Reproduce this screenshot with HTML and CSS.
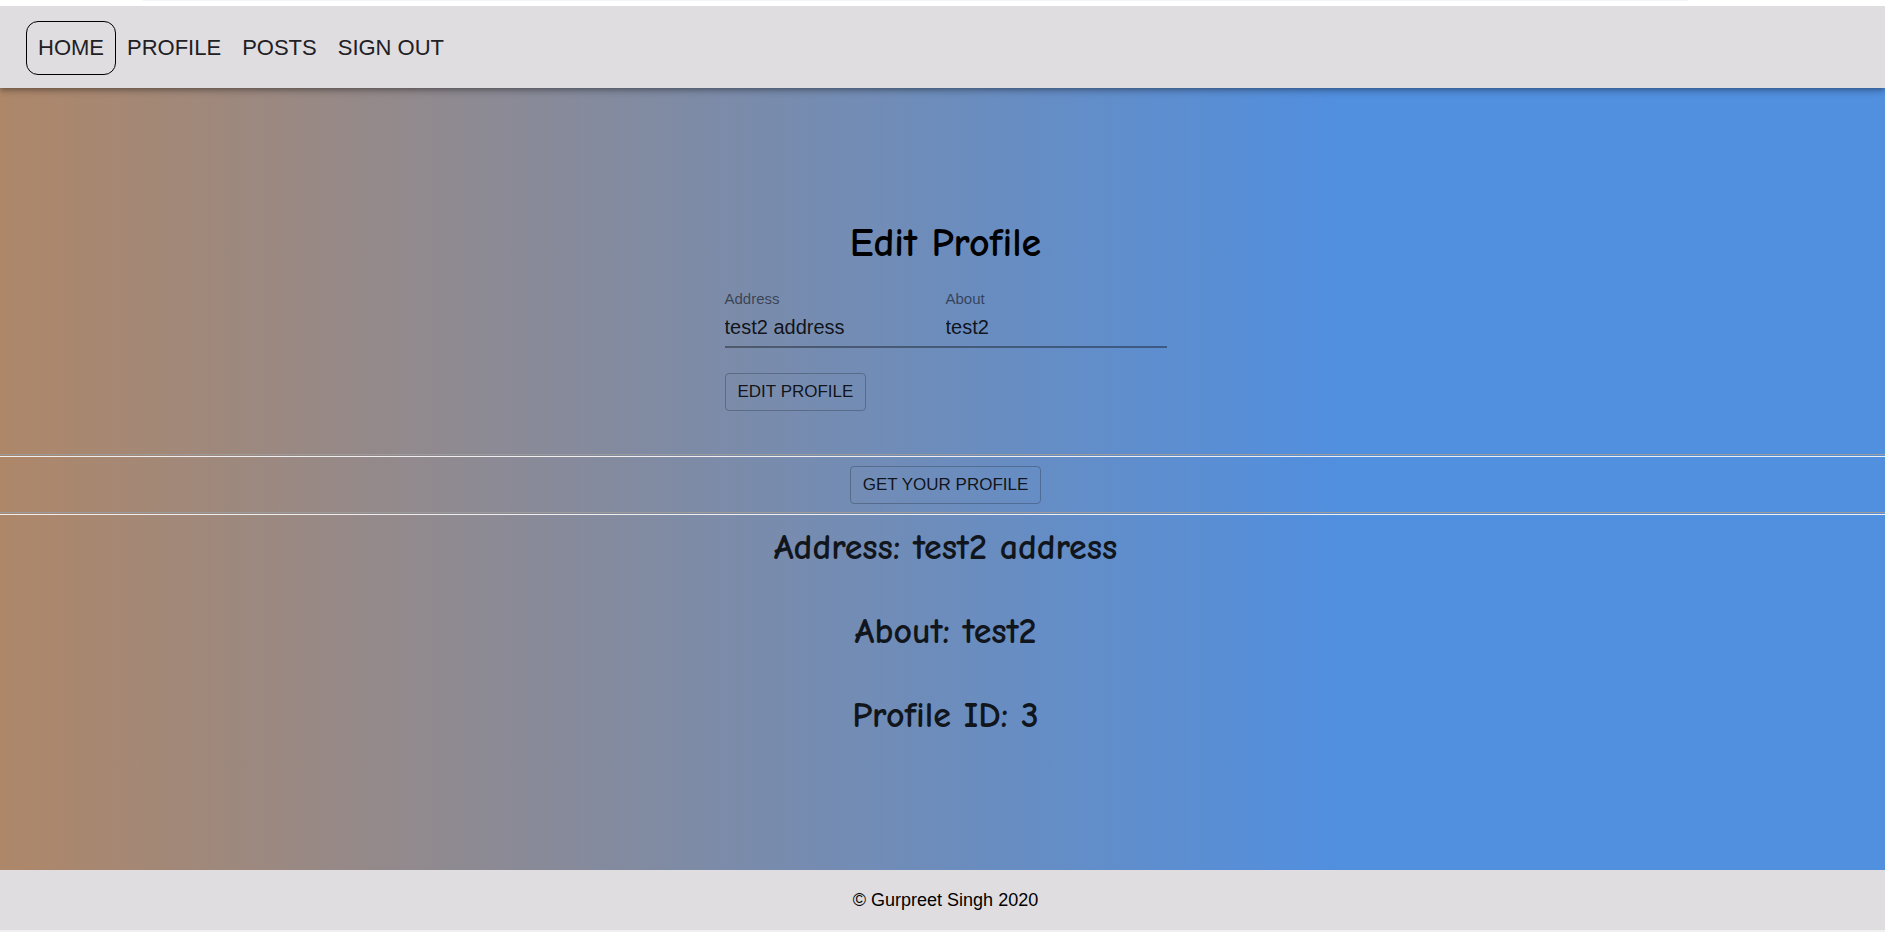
FILE: index.html
```html
<!DOCTYPE html>
<html lang="en">
<head>
<meta charset="utf-8">
<title>Profile</title>
<link rel="stylesheet" href="styles.css">
</head>
<body>
<div class="top-edge"><div class="top-line"></div></div>
<header class="navbar">
  <nav class="nav">
    <a class="nav-link active" href="#home">HOME</a>
    <a class="nav-link" href="#profile">PROFILE</a>
    <a class="nav-link" href="#posts">POSTS</a>
    <a class="nav-link" href="#signout">SIGN OUT</a>
  </nav>
</header>
<main class="page">
  <div class="edit">
    <h1 class="title">Edit Profile</h1>
    <form class="profile-form">
      <div class="fields">
        <div class="field">
          <label class="label" for="address">Address</label>
          <input class="input" id="address" type="text" value="test2 address">
        </div>
        <div class="field">
          <label class="label" for="about">About</label>
          <input class="input" id="about" type="text" value="test2">
        </div>
      </div>
      <button class="button" type="button">EDIT PROFILE</button>
    </form>
  </div>
  <section class="fetch">
    <button class="button" type="button">GET YOUR PROFILE</button>
  </section>
  <section class="details">
    <h2 class="detail">Address: test2 address</h2>
    <h2 class="detail">About: test2</h2>
    <h2 class="detail">Profile ID: 3</h2>
  </section>
</main>
<footer class="footer">© Gurpreet Singh 2020</footer>
</body>
</html>
```

FILE: styles.css
```css
* {
  box-sizing: border-box;
}

body {
  margin: 0;
  min-height: 100vh;
  display: flex;
  flex-direction: column;
  background: #fff;
  color: #000;
  font-family: Arial, "Liberation Sans", sans-serif;
}

.top-edge {
  position: relative;
  z-index: 2;
  height: 6px;
  padding: 0 197px 0 143px;
  background: #fff;
}

.top-line {
  height: 1px;
  background: #f1f3f4;
}

.navbar {
  position: relative;
  padding: 15px 26px 13px;
  background: #dfdde0;
  box-shadow: 0 2px 4px -1px rgba(0, 0, 0, 0.2), 0 4px 5px rgba(0, 0, 0, 0.14), 0 1px 10px rgba(0, 0, 0, 0.12);
}

.nav {
  display: flex;
  gap: 1px;
}

.nav-link {
  padding: 0 9px;
  border: 1px solid transparent;
  border-radius: 12px;
  color: #212025;
  font-size: 22px;
  line-height: 52px;
  text-decoration: none;
}

.nav-link.active {
  padding: 0 11px;
  border-color: #000;
}

.page {
  flex: 1;
  padding-top: 128px;
  background: linear-gradient(to right, #ae8769, #518fdf 71%);
}

.edit,
.fetch,
.details,
.footer {
  display: flex;
  flex-direction: column;
  align-items: center;
  padding-left: 6px;
}

.title,
.detail {
  margin: 0;
  font-family: "Comic Sans MS", "Comic Neue", "Noto Sans", cursive;
  font-weight: 700;
}

.title {
  font-size: 40px;
  line-height: 54px;
}

.profile-form {
  width: 442px;
  padding-top: 20px;
}

.fields {
  display: flex;
  margin-bottom: 25px;
}

.field {
  flex: 1;
  min-width: 0;
  display: flex;
  flex-direction: column;
  border-bottom: 2px solid rgba(0, 0, 0, 0.36);
}

.label {
  color: rgba(0, 0, 0, 0.54);
  font-size: 15px;
  line-height: 18px;
}

.input {
  width: 100%;
  height: 38px;
  padding: 0;
  border: 0;
  background: none;
  color: rgba(0, 0, 0, 0.87);
  font-family: inherit;
  font-size: 20px;
}

.button {
  height: 38px;
  padding: 0 12px;
  border: 1px solid rgba(0, 0, 0, 0.23);
  border-radius: 4px;
  background: none;
  color: rgba(0, 0, 0, 0.87);
  font-family: inherit;
  font-size: 17px;
}

.fetch {
  margin-top: 43px;
  padding-top: 9px;
  padding-bottom: 8px;
  border: 3px double #f0eeee;
  border-width: 3px 0;
  border-image: linear-gradient(#9a9a9a 1px, transparent 1px 2px, #f0eeee 2px 3px, transparent 3px calc(100% - 3px), #9a9a9a calc(100% - 3px) calc(100% - 2px), transparent calc(100% - 2px) calc(100% - 1px), #f0eeee calc(100% - 1px)) 3 0 / 3px 0;
}

.detail {
  margin: 10px 0 28px;
  color: #11151c;
  font-size: 36px;
  line-height: 46px;
}

.footer {
  padding-top: 15px;
  padding-bottom: 15px;
  border-bottom: 2px solid #f0f0f0;
  background: #dfdde0;
  font-size: 18px;
  line-height: 30px;
}
```
